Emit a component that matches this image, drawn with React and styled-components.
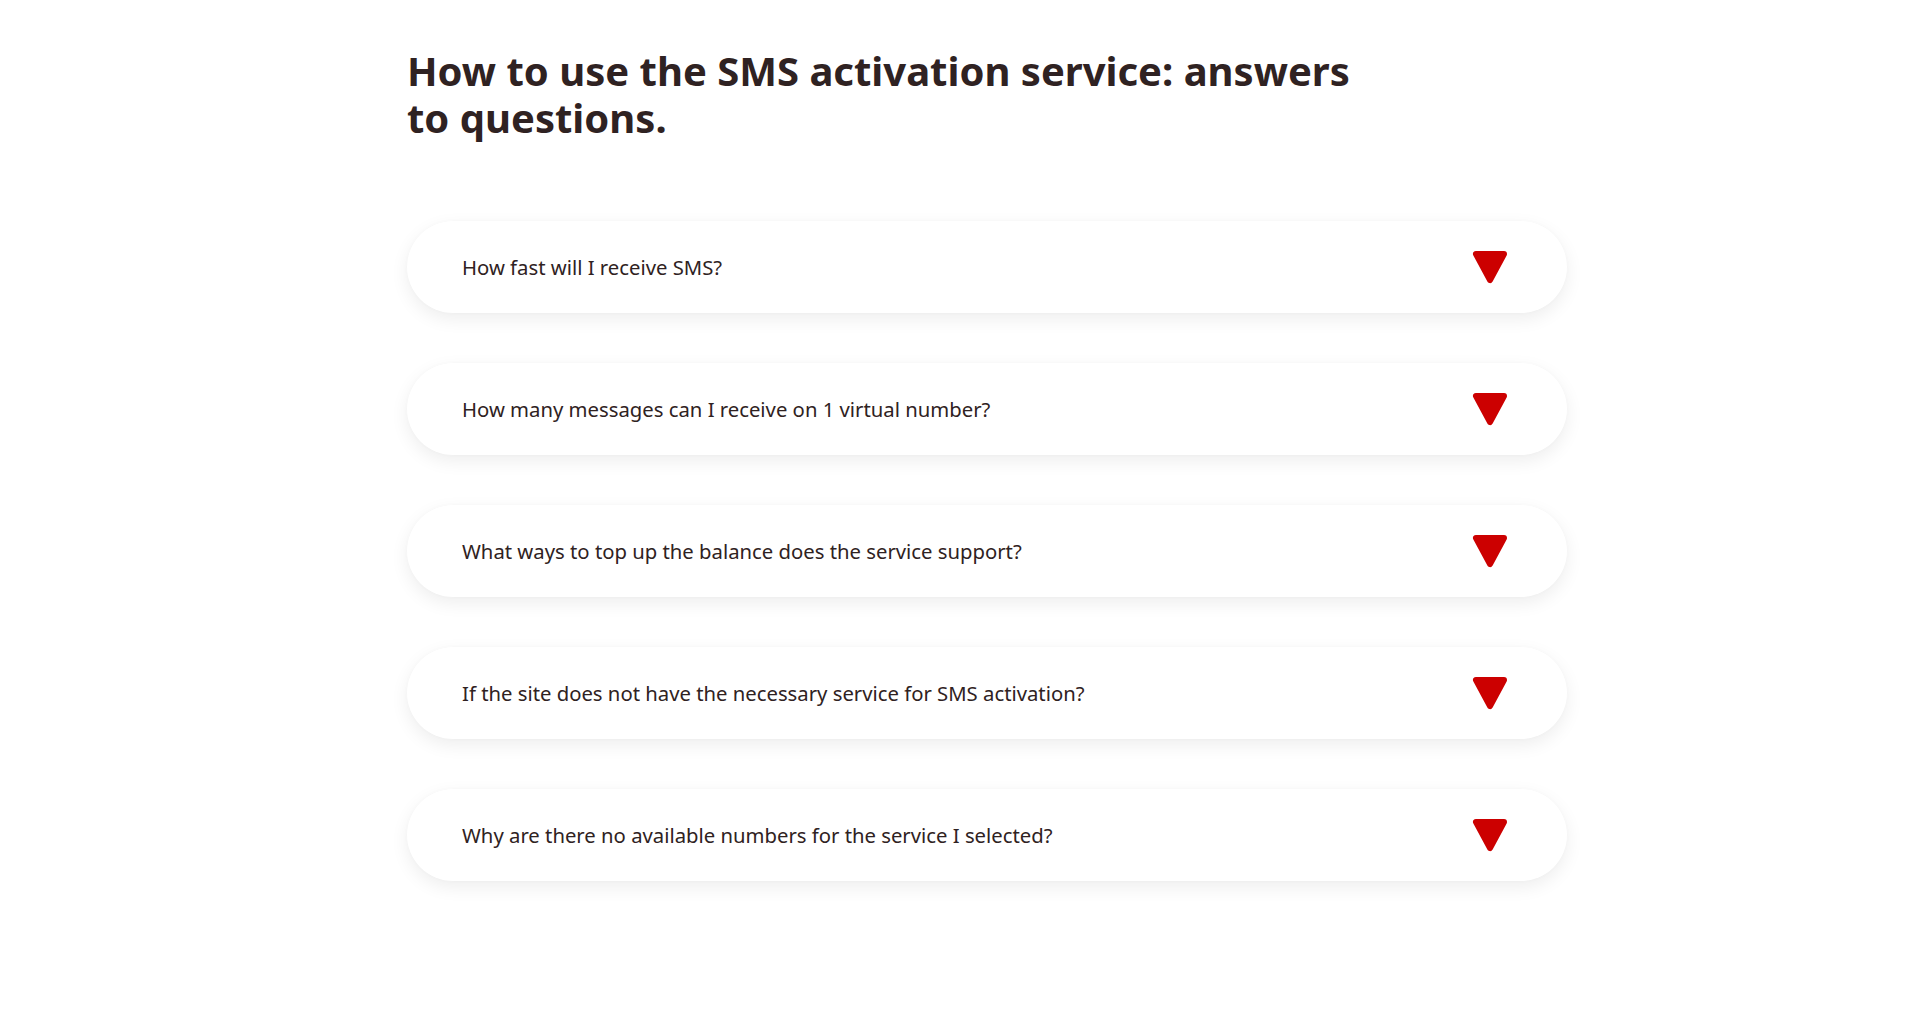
import React from 'react';
import styled, { createGlobalStyle } from 'styled-components';

const GlobalStyle = createGlobalStyle`
  body {
    margin: 0;
    background: #ffffff;
    font-family: "Noto Sans", "Open Sans", sans-serif;
    color: #2f2222;
  }
`;

const Section = styled.section`
  width: 1210px;
  margin: 0 auto;
  padding: 47px 0 80px 50px;
  box-sizing: border-box;
`;

const Title = styled.h2`
  margin: 0 0 80px;
  max-width: 960px;
  font-size: 40px;
  line-height: 47px;
  font-weight: 700;
  color: #2f2222;
`;

const List = styled.div`
  display: flex;
  flex-direction: column;
  gap: 50px;
`;

const Item = styled.div`
  display: flex;
  align-items: center;
  justify-content: space-between;
  height: 92px;
  padding: 0 59px 0 55px;
  border-radius: 46px;
  background: #ffffff;
  box-shadow: 0 6px 18px rgba(0, 0, 0, 0.07), 0 0 4px rgba(0, 0, 0, 0.02);
`;

const Question = styled.span`
  font-size: 20.3px;
  color: #2f2222;
`;

const Arrow = () => (
  <svg width="36" height="34" viewBox="0 0 36 34">
    <path
      d="M4 4 L32 4 L18 30 Z"
      fill="#cc0000"
      stroke="#cc0000"
      strokeWidth="6"
      strokeLinejoin="round"
    />
  </svg>
);

const questions = [
  'How fast will I receive SMS?',
  'How many messages can I receive on 1 virtual number?',
  'What ways to top up the balance does the service support?',
  'If the site does not have the necessary service for SMS activation?',
  'Why are there no available numbers for the service I selected?',
];

export default function App() {
  return (
    <>
      <GlobalStyle />
      <Section>
        <Title>How to use the SMS activation service: answers to questions.</Title>
        <List>
          {questions.map((q) => (
            <Item key={q}>
              <Question>{q}</Question>
              <Arrow />
            </Item>
          ))}
        </List>
      </Section>
    </>
  );
}
